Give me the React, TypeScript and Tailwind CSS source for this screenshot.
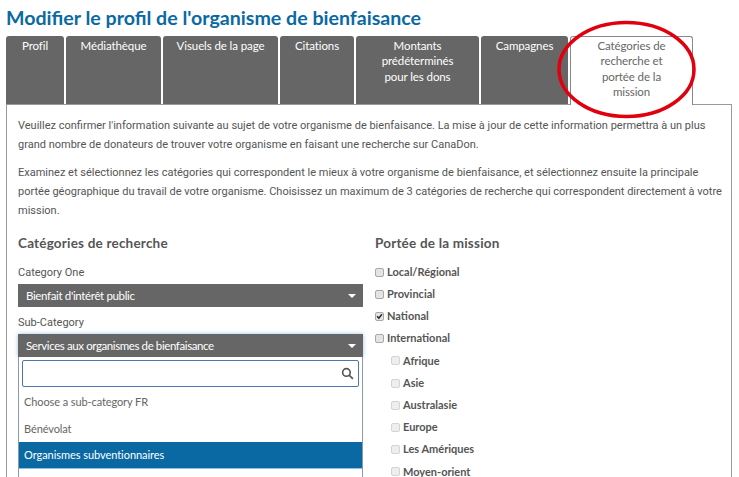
import React from "react";

const tabs = [
  { label: "Profil", w: "w-[58px]" },
  { label: "Médiathèque", w: "w-[95px]" },
  { label: "Visuels de la page", w: "w-[115px]" },
  { label: "Citations", w: "w-[74px]" },
  { label: "Montants prédéterminés pour les dons", w: "w-[123px]", pad: "px-5" },
  { label: "Campagnes", w: "w-[87px]" },
];

function Caret() {
  return <span className="w-0 h-0 border-l-[4px] border-r-[4px] border-t-[4px] border-l-transparent border-r-transparent border-t-white" />;
}

function Box({ checked, sub }: { checked?: boolean; sub?: boolean }) {
  return (
    <span className={`relative w-[9px] h-[9px] shrink-0 rounded-[2px] border ${sub ? "border-[#d4d4d4] bg-[#eeeeee]" : "border-[#a8a8a8] bg-[#e4e4e4]"} flex items-center justify-center`}>
      {checked && (
        <svg viewBox="0 0 10 10" className="w-[8px] h-[8px]">
          <path d="M1.5 5.5 L4 8 L8.5 2.5" fill="none" stroke="#222" strokeWidth="2" />
        </svg>
      )}
    </span>
  );
}

function Check({ label, checked, sub }: { label: string; checked?: boolean; sub?: boolean }) {
  return (
    <div className={`h-[22.2px] flex items-center text-[11px] font-bold text-[#555] ${sub ? "pl-[16px] gap-[3px]" : "gap-[3px]"}`}>
      <Box checked={checked} sub={sub} />
      <span>{label}</span>
    </div>
  );
}

export default function App() {
  return (
    <div className="relative w-[739px] h-[477px] overflow-hidden bg-white font-['Lato',sans-serif] text-[#555]">
      <h1 className="pl-[6px] pt-[5px] h-[36px] text-[19.6px] leading-[25px] font-bold text-[#0a69a3]">
        Modifier le profil de l'organisme de bienfaisance
      </h1>
      <div className="flex gap-[2px] pl-[6px] h-[68px] relative z-10">
        {tabs.map((t) => (
          <div key={t.label} className={`${t.w} ${t.pad ?? ""} h-[68px] bg-[#666666] rounded-t-[3px] pt-[2px] text-center text-white text-[11.5px] tracking-[-0.1px] leading-[15.4px]`}>
            {t.label}
          </div>
        ))}
        <div className="w-[123px] h-[69px] bg-white border border-b-0 border-[#888] rounded-t-[3px] pt-[1px] px-[20px] text-center text-[#666] text-[11.5px] tracking-[-0.1px] leading-[15.4px]">
          Catégories de recherche et portée de la mission
        </div>
      </div>
      <div className="ml-[6px] w-[726px] h-[400px] border border-[#999] pl-[11px] pr-[5px] pt-[11px]">
        <div className="font-['Roboto',sans-serif] text-[11px] leading-[19px] text-[#555]">
          <p>Veuillez confirmer l'information suivante au sujet de votre organisme de bienfaisance. La mise à jour de cette information permettra à un plus grand nombre de donateurs de trouver votre organisme en faisant une recherche sur CanaDon.</p>
          <p className="mt-[9px]">Examinez et sélectionnez les catégories qui correspondent le mieux à votre organisme de bienfaisance, et sélectionnez ensuite la principale portée géographique du travail de votre organisme. Choisissez un maximum de 3 catégories de recherche qui correspondent directement à votre mission.</p>
        </div>
        <div className="flex mt-[15px]">
          <div className="w-[345px] shrink-0">
            <h2 className="text-[13.5px] leading-[17px] font-bold tracking-[0.2px] text-[#555]">Catégories de recherche</h2>
            <div className="mt-[14px] font-['Roboto',sans-serif] text-[11px] leading-[14px] text-[#555]">Category One</div>
            <div className="mt-[4px] h-[23px] bg-[#666666] flex items-center justify-between pl-[8px] pr-[7px] text-white text-[11.5px] tracking-[-0.35px]">
              <span>Bienfait d'intérêt public</span>
              <Caret />
            </div>
            <div className="mt-[9px] font-['Roboto',sans-serif] text-[11px] leading-[14px] text-[#555]">Sub-Category</div>
            <div className="mt-[4px] h-[23px] bg-[#666666] flex items-center justify-between pl-[8px] pr-[7px] text-white text-[11.5px] tracking-[-0.4px] shadow-[0_0_4px_rgba(100,170,230,0.7)]">
              <span>Services aux organismes de bienfaisance</span>
              <Caret />
            </div>
            <div className="border-x border-[#8a9aaa] bg-white">
              <div className="px-[3px] pt-[3px]">
                <div className="h-[27px] border border-[#4a78ac] rounded-[2px] flex items-center justify-end pr-[4px]">
                  <svg viewBox="0 0 24 24" className="w-[13px] h-[13px]" fill="none" stroke="#555" strokeWidth="3">
                    <circle cx="10" cy="10" r="7" />
                    <path d="M15 15 L22 22" />
                  </svg>
                </div>
              </div>
              <div className="h-[27px] mt-[2px] flex items-center pl-[5px] text-[11px] tracking-[-0.1px] text-[#666]">Choose a sub-category FR</div>
              <div className="h-[26px] flex items-center pl-[5px] text-[11px] tracking-[-0.1px] text-[#666]">Bénévolat</div>
              <div className="h-[26px] flex items-center pl-[5px] text-[11px] tracking-[-0.05px] text-white bg-[#0a69a3]">Organismes subventionnaires</div>
              <div className="h-[26px] border-t border-[#8fc0e0]" />
            </div>
          </div>
          <div className="ml-[12px]">
            <h2 className="text-[13.5px] leading-[17px] font-bold tracking-[0.2px] text-[#555]">Portée de la mission</h2>
            <div className="mt-[9px]">
              <Check label="Local/Régional" />
              <Check label="Provincial" />
              <Check label="National" checked />
              <Check label="International" />
              <Check label="Afrique" sub />
              <Check label="Asie" sub />
              <Check label="Australasie" sub />
              <Check label="Europe" sub />
              <Check label="Les Amériques" sub />
              <Check label="Moyen-orient" sub />
            </div>
          </div>
        </div>
      </div>
      <svg className="absolute left-[553px] top-[16px] z-20" width="146" height="106" viewBox="0 0 146 106">
        <ellipse cx="73.5" cy="53.5" rx="67.5" ry="47" fill="none" stroke="#e0000e" strokeWidth="3.5" />
      </svg>
    </div>
  );
}
